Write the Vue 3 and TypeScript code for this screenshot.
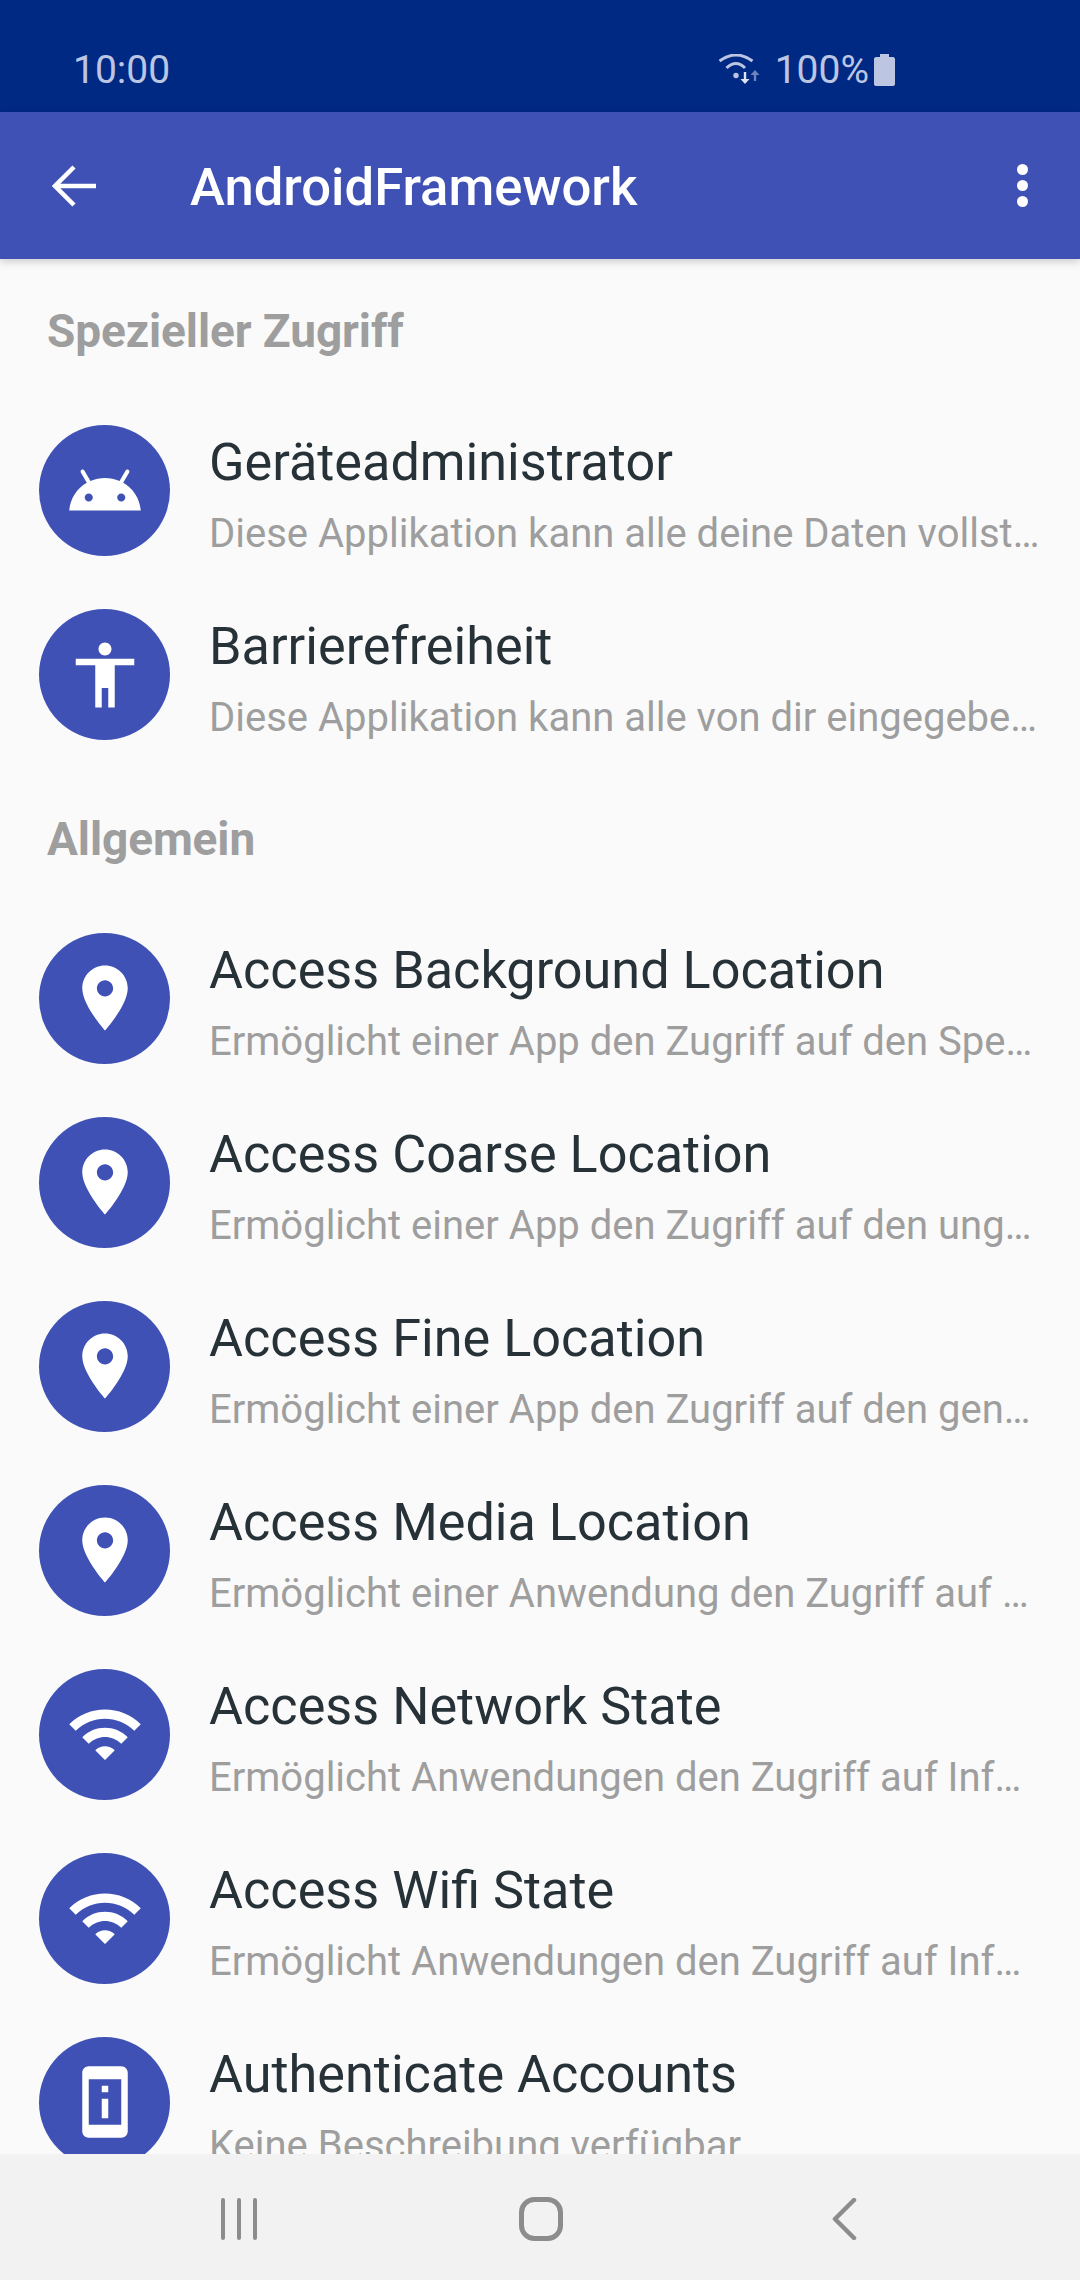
<script setup lang="ts">
// Icon paths on a 24x24 grid
const icons: Record<string, string> = {
  android:
    'M17.6 9.48l1.84-3.18c.16-.31.04-.69-.26-.85-.29-.15-.65-.06-.83.22l-1.88 3.24c-2.86-1.21-6.08-1.21-8.94 0L5.65 5.67c-.19-.29-.58-.38-.87-.2-.28.18-.37.54-.22.83L6.4 9.48C3.3 11.25 1.28 14.44 1 18h22c-.28-3.56-2.3-6.75-5.4-8.52zM7 15.25c-.69 0-1.25-.56-1.25-1.25s.56-1.25 1.25-1.25 1.25.56 1.25 1.25-.56 1.25-1.25 1.25zm10 0c-.69 0-1.25-.56-1.25-1.25s.56-1.25 1.25-1.25 1.25.56 1.25 1.25-.56 1.25-1.25 1.25z',
  accessibility:
    'M12 2c1.1 0 2 .9 2 2s-.9 2-2 2-2-.9-2-2 .9-2 2-2zm9 7h-6v13h-2v-6h-2v6H9V9H3V7h18v2z',
  place:
    'M12 2C8.13 2 5 5.13 5 9c0 5.25 7 13 7 13s7-7.75 7-13c0-3.87-3.13-7-7-7zm0 9.5c-1.38 0-2.5-1.12-2.5-2.5s1.12-2.5 2.5-2.5 2.5 1.12 2.5 2.5-1.12 2.5-2.5 2.5z',
  wifi:
    'M1 9l2 2c4.97-4.97 13.03-4.97 18 0l2-2C16.93 2.93 7.08 2.93 1 9zm8 8l3 3 3-3c-1.65-1.66-4.34-1.66-6 0zm-4-4l2 2c2.76-2.76 7.24-2.76 10 0l2-2C15.14 9.14 8.87 9.14 5 13z',
  device:
    'M13 7h-2v2h2V7zm0 4h-2v6h2v-6zm4-9.99L7 1c-1.1 0-2 .9-2 2v18c0 1.1.9 2 2 2h10c1.1 0 2-.9 2-2V3c0-1.1-.9-1.99-2-1.99zM17 19H7V5h10v14z',
}

interface Row {
  icon: string
  title: string
  text: string
}

const sections: { name: string; rows: Row[] }[] = [
  {
    name: 'Spezieller Zugriff',
    rows: [
      {
        icon: 'android',
        title: 'Geräteadministrator',
        text: 'Diese Applikation kann alle deine Daten vollständig löschen',
      },
      {
        icon: 'accessibility',
        title: 'Barrierefreiheit',
        text: 'Diese Applikation kann alle von dir eingegebenen Texte lesen',
      },
    ],
  },
  {
    name: 'Allgemein',
    rows: [
      {
        icon: 'place',
        title: 'Access Background Location',
        text: 'Ermöglicht einer App den Zugriff auf den Speicherort im Hintergrund',
      },
      {
        icon: 'place',
        title: 'Access Coarse Location',
        text: 'Ermöglicht einer App den Zugriff auf den ungefähren Standort',
      },
      {
        icon: 'place',
        title: 'Access Fine Location',
        text: 'Ermöglicht einer App den Zugriff auf den genauen Standort',
      },
      {
        icon: 'place',
        title: 'Access Media Location',
        text: 'Ermöglicht einer Anwendung den Zugriff auf Standorte in Medien',
      },
      {
        icon: 'wifi',
        title: 'Access Network State',
        text: 'Ermöglicht Anwendungen den Zugriff auf Informationen über Netzwerke',
      },
      {
        icon: 'wifi',
        title: 'Access Wifi State',
        text: 'Ermöglicht Anwendungen den Zugriff auf Informationen über WLAN',
      },
      {
        icon: 'device',
        title: 'Authenticate Accounts',
        text: 'Keine Beschreibung verfügbar',
      },
    ],
  },
]
</script>

<template>
  <div class="screen">
    <!-- status bar -->
    <div class="status">
      <span class="clock">10:00</span>
      <div class="status-right">
        <svg width="44" height="32" viewBox="0 0 44 32">
          <path d="M0.5 7Q17 -5 33.5 7" fill="none" stroke="#bcc6e3" stroke-width="3" />
          <path d="M7.5 14Q17 5 26 14" fill="none" stroke="#bcc6e3" stroke-width="3" />
          <circle cx="17" cy="21.5" r="2.7" fill="#bcc6e3" />
          <path d="M26 18v8" stroke="#dfe4f2" stroke-width="2.4" />
          <path d="M21.5 25h9L26 30z" fill="#dfe4f2" />
          <path d="M36 27v-7" stroke="#6f84bd" stroke-width="2.4" />
          <path d="M31.5 21h9L36 16z" fill="#6f84bd" />
        </svg>
        <span class="percent">100%</span>
        <svg width="21" height="32" viewBox="0 0 21 32">
          <path d="M6 0h9v3h4c1 0 2 1 2 2v25c0 1-1 2-2 2H2c-1 0-2-1-2-2V5c0-1 1-2 2-2h4z" fill="#bcc6e3" />
        </svg>
      </div>
    </div>

    <!-- toolbar -->
    <header class="toolbar">
      <svg class="back" width="44" height="42" viewBox="0 0 44 42">
        <path d="M22 2L3 21l19 19M3 21h41" fill="none" stroke="#fff" stroke-width="4.5" />
      </svg>
      <span class="title">AndroidFramework</span>
      <div class="dots"><i></i><i></i><i></i></div>
    </header>

    <!-- permission list -->
    <main class="list">
      <section v-for="section in sections" :key="section.name">
        <h2 class="section-name">{{ section.name }}</h2>
        <div v-for="row in section.rows" :key="row.title" class="row">
          <div class="circle">
            <svg width="78" height="78" viewBox="0 0 24 24">
              <path :d="icons[row.icon]" fill="#fff" />
            </svg>
          </div>
          <div class="texts">
            <div class="row-title">{{ row.title }}</div>
            <div class="row-text">{{ row.text }}</div>
          </div>
        </div>
      </section>
    </main>

    <!-- system navigation -->
    <nav class="navbar">
      <svg width="38" height="42" viewBox="0 0 38 42">
        <path d="M3 2v38M19 2v38M35 2v38" fill="none" stroke="#8c8c8c" stroke-width="4" stroke-linecap="round" />
      </svg>
      <svg width="44" height="44" viewBox="0 0 44 44">
        <rect x="2.5" y="2.5" width="39" height="39" rx="13" fill="none" stroke="#8c8c8c" stroke-width="5" />
      </svg>
      <svg width="26" height="42" viewBox="0 0 26 42">
        <path d="M23 2L4 21l19 19" fill="none" stroke="#8c8c8c" stroke-width="4.5" stroke-linecap="round" stroke-linejoin="round" />
      </svg>
    </nav>
  </div>
</template>

<style>
html,
body {
  margin: 0;
  background: #fafafa;
}
</style>

<style scoped>
.screen {
  width: 1080px;
  height: 2280px;
  display: flex;
  flex-direction: column;
  overflow: hidden;
  background: #fafafa;
  font-family: Roboto, "Noto Sans", sans-serif;
}

.status {
  height: 112px;
  flex: none;
  background: #002984;
  display: flex;
  align-items: center;
  justify-content: space-between;
  padding: 0 185px 0 73px;
  box-sizing: border-box;
  color: #bcc6e3;
  font-size: 39px;
}
.clock {
  line-height: 44px;
  margin-top: 27px;
}
.status-right {
  display: flex;
  align-items: center;
  margin-top: 27px;
}
.percent {
  margin: 0 5px 0 12px;
  line-height: 44px;
}

.toolbar {
  position: relative;
  z-index: 2;
  height: 147px;
  flex: none;
  background: #3f51b5;
  display: flex;
  align-items: center;
  padding: 2px 52px 0;
  box-sizing: border-box;
  box-shadow: 0 3px 8px rgba(0, 0, 0, 0.18);
}
.back {
  flex: none;
  margin-top: -2px;
}
.title {
  margin-left: 94px;
  color: #fff;
  font-size: 52.6px;
  font-weight: 500;
  flex: 1;
}
.dots {
  display: flex;
  flex-direction: column;
  gap: 5px;
  margin-top: -2px;
}
.dots i {
  display: block;
  width: 11px;
  height: 11px;
  border-radius: 50%;
  background: #fff;
}

.list {
  flex: 1;
  min-height: 0;
  overflow: hidden;
}
.section-name {
  margin: 0;
  height: 139.5px;
  box-sizing: border-box;
  padding: 46px 47px 0;
  font-size: 46px;
  line-height: 52px;
  font-weight: 700;
  color: #9e9e9e;
  letter-spacing: -0.1px;
}
.row {
  height: 184px;
  display: flex;
  align-items: center;
  padding: 0 39px;
}
.circle {
  width: 131px;
  height: 131px;
  flex: none;
  border-radius: 50%;
  background: #3f51b5;
  display: flex;
  align-items: center;
  justify-content: center;
}
.texts {
  margin-left: 39px;
  padding-top: 6px;
  min-width: 0;
  flex: 1;
}
.row-title {
  font-size: 52.2px;
  line-height: 70px;
  color: #263238;
  white-space: nowrap;
  overflow: hidden;
  text-overflow: ellipsis;
}
.row-text {
  margin-top: 11px;
  font-size: 40px;
  line-height: 50px;
  color: #9e9e9e;
  white-space: nowrap;
  overflow: hidden;
  text-overflow: ellipsis;
}

.navbar {
  height: 126px;
  flex: none;
  box-sizing: border-box;
  padding: 4px 3px 0 0;
  background: #f2f2f2;
  display: flex;
  align-items: center;
  justify-content: center;
}
.navbar svg:nth-child(1) {
  margin-right: 261px;
}
.navbar svg:nth-child(3) {
  margin-left: 268px;
}
</style>
